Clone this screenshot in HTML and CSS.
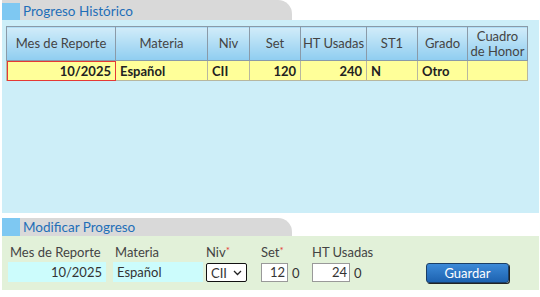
FILE: index.html
```html
<!DOCTYPE html>
<html lang="es">
<head>
  <meta charset="UTF-8">
  <title>Progreso</title>
  <link rel="stylesheet" href="styles.css">
</head>
<body>
  <div class="section">
    <div class="tab"><span class="tab-box"></span><span class="tab-title">Progreso Histórico</span></div>
    <div class="panel history">
      <table class="grid">
        <colgroup>
          <col class="c-mes"><col class="c-mat"><col class="c-niv"><col class="c-set">
          <col class="c-ht"><col class="c-st"><col class="c-gr"><col class="c-cu">
        </colgroup>
        <tr>
          <th>Mes de Reporte</th>
          <th>Materia</th>
          <th>Niv</th>
          <th>Set</th>
          <th class="nowrap">HT Usadas</th>
          <th>ST1</th>
          <th>Grado</th>
          <th>Cuadro de Honor</th>
        </tr>
        <tr class="selected">
          <td class="num current">10/2025</td>
          <td>Español</td>
          <td>CII</td>
          <td class="num">120</td>
          <td class="num">240</td>
          <td>N</td>
          <td>Otro</td>
          <td></td>
        </tr>
      </table>
    </div>
  </div>

  <div class="section edit">
    <div class="tab"><span class="tab-box"></span><span class="tab-title">Modificar Progreso</span></div>
    <div class="panel form">
      <div class="field f-mes">
        <label>Mes de Reporte</label>
        <div class="ro num">10/2025</div>
      </div>
      <div class="field f-mat">
        <label>Materia</label>
        <div class="ro">Español</div>
      </div>
      <div class="field f-niv">
        <label>Niv<span class="req">*</span></label>
        <div class="select">CII
          <svg width="9" height="6" viewBox="0 0 9 6"><path d="M1 1l3.5 3.5L8 1" fill="none" stroke="#222" stroke-width="1.3"/></svg>
        </div>
      </div>
      <div class="field f-set">
        <label>Set<span class="req">*</span></label>
        <div class="row"><div class="box small">12</div><span class="unit">0</span></div>
      </div>
      <div class="field f-ht">
        <label>HT Usadas</label>
        <div class="row"><div class="box wide">24</div><span class="unit">0</span></div>
      </div>
      <button class="save">Guardar</button>
    </div>
  </div>
</body>
</html>
```

FILE: styles.css
```css
body {
  margin: 0;
  font-family: Lato, "Noto Sans", sans-serif;
  font-size: 13px;
  color: #333;
  background: #fff;
  width: 540px;
  height: 297px;
  overflow: hidden;
}

.section {
  margin: 0 1px 0 2px;
}

.tab {
  width: 290px;
  height: 20px;
  background: #d9d9d9;
  border-top-right-radius: 14px;
  display: flex;
  align-items: flex-end;
}

.tab-box {
  width: 18px;
  height: 17px;
  background: #7ec8f2;
}

.tab-title {
  color: #1f6fb8;
  font-size: 13.5px;
  margin-left: 3px;
  line-height: 17px;
}

.panel {
  background: #cdeef8;
}

.history {
  height: 193px;
  padding: 6px 0 0 4px;
  box-sizing: border-box;
}

.grid {
  border-collapse: collapse;
  table-layout: fixed;
  width: 521px;
  font-size: 13px;
}

.c-mes { width: 109px; }
.c-mat { width: 92px; }
.c-niv { width: 42px; }
.c-set { width: 51px; }
.c-ht { width: 66px; }
.c-st { width: 51px; }
.c-gr { width: 50px; }
.c-cu { width: 60px; }

.grid th {
  height: 33px;
  padding: 0 2px;
  font-weight: normal;
  color: #444;
  line-height: 15px;
  background: linear-gradient(#d1ecf9, #8fcdf0);
  border: 1px solid #8a9aa8;
}

.grid th.nowrap {
  white-space: nowrap;
  padding: 0;
}

.grid td {
  height: 19px;
  padding: 0 4px;
  background: #ffff99;
  border: 1px solid #b7b7a0;
  font-weight: bold;
  color: #222;
}

.grid td.num {
  text-align: right;
}

.grid td.current {
  outline: 1px solid #e53935;
  outline-offset: -1px;
}

.edit {
  margin-top: 5px;
}

.edit .tab {
  height: 18px;
}

.edit .tab-box {
  height: 18px;
}

.form {
  background: #e2f1d9;
  height: 54px;
  display: flex;
  align-items: flex-start;
  padding: 8px 0 0 6px;
  box-sizing: border-box;
}

.field label {
  display: block;
  color: #444;
  height: 17px;
  margin-left: 2px;
}

.req {
  color: #e53935;
  font-size: 10px;
  vertical-align: top;
}

.ro {
  height: 20px;
  line-height: 20px;
  background: #ccfcfc;
  padding: 0 4px;
  margin-top: 1px;
  box-sizing: border-box;
}

.ro.num {
  text-align: right;
}

.f-mes { width: 105px; }
.f-mes .ro { width: 98px; }
.f-mat { width: 93px; }
.f-mat .ro { width: 90px; }
.f-niv { width: 55px; }
.f-set { width: 51px; }
.f-ht { width: 100px; }

.f-niv label, .f-set label, .f-ht label {
  margin-left: 0;
}

.select {
  width: 41px;
  height: 19px;
  border: 1.5px solid #111;
  border-radius: 2px;
  box-sizing: border-box;
  margin-top: 2px;
  padding: 0 4px;
  display: flex;
  align-items: center;
  justify-content: space-between;
  background: #fff;
}

.row {
  display: flex;
  align-items: center;
  margin-top: 2px;
}

.box {
  height: 19px;
  line-height: 17px;
  border: 1px solid #999;
  box-sizing: border-box;
  background: #fff;
  text-align: right;
  padding-right: 2px;
}

.box.small { width: 27px; }
.box.wide { width: 38px; }

.unit {
  margin-left: 4px;
}

.save {
  margin-top: 19px;
  margin-left: 14px;
  width: 83px;
  height: 20px;
  border: 1px solid #1a3e66;
  border-radius: 3px;
  background: linear-gradient(#3c8ad8, #1d62b0);
  color: #fff;
  font-family: inherit;
  font-size: 13px;
  padding: 0;
  box-shadow: 1px 1px 0 #222;
}
```
